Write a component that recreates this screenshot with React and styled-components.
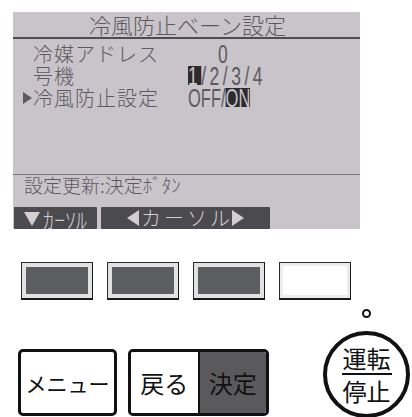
import React from "react";
import styled, { createGlobalStyle } from "styled-components";

const GlobalStyle = createGlobalStyle`
  html, body {
    margin: 0;
    padding: 0;
    background: #ffffff;
    overflow: hidden;
  }
  body {
    font-family: "Noto Sans CJK JP", "Noto Sans", sans-serif;
  }
`;

const lcd = {
  bg: "#c9c3ca",
  ink: "#5c5a5e",
  dark: "#4b4a4e",
};

const rows = [
  { label: "冷媒アドレス", value: "addr" },
  { label: "号機", value: "unit" },
  { label: "冷風防止設定", value: "mode", selected: true },
];

function App() {
  return (
    <>
      <GlobalStyle />
      <Page>
        <Screen>
          <Title>冷風防止ベーン設定</Title>
          <TitleRule />
          <Rows>
            {rows.map((row) => (
              <Row key={row.label}>
                <Marker>{row.selected && <Tri $dir="right" $size={6} />}</Marker>
                <Label>{row.label}</Label>
                {row.value === "addr" && <Digits $pad={43}>0</Digits>}
                {row.value === "unit" && (
                  <Digits $spacing={5}>
                    <Hi>1</Hi>/2/3/4
                  </Digits>
                )}
                {row.value === "mode" && (
                  <Digits $scale={0.66}>
                    OFF/<Hi>ON</Hi>
                  </Digits>
                )}
              </Row>
            ))}
          </Rows>
          <Rule />
          <Hint>設定更新:決定ﾎﾞﾀﾝ</Hint>
          <SoftKeys>
            <SoftKey $width={83}>
              <DownTri />
              <SoftText $size={22}>ｶｰｿﾙ</SoftText>
            </SoftKey>
            <SoftKey $width={169}>
              <Tri $dir="left" $size={8} />
              <SoftText $spacing={3}>カーソル</SoftText>
              <Tri $dir="right" $size={8} />
            </SoftKey>
          </SoftKeys>
        </Screen>

        <FnRow>
          <FnKey />
          <FnKey />
          <FnKey />
          <FnKey $light />
        </FnRow>

        <ControlRow>
          <MenuButton>メニュー</MenuButton>
          <PairButton>
            <PairHalf>戻る</PairHalf>
            <PairHalf $dark>決定</PairHalf>
          </PairButton>
          <PowerColumn>
            <Lamp />
            <PowerButton>
              <PowerText>運転</PowerText>
              <PowerRule />
              <PowerText>停止</PowerText>
            </PowerButton>
          </PowerColumn>
        </ControlRow>
      </Page>
    </>
  );
}

export default App;

const Page = styled.div`
  padding: 12px 0 0 13px;
  display: flex;
  flex-direction: column;
  align-items: flex-start;
`;

const Screen = styled.div`
  width: 347px;
  height: 217px;
  background: ${lcd.bg};
  color: ${lcd.ink};
  font-weight: 300;
  display: flex;
  flex-direction: column;
`;

const Title = styled.div`
  height: 25px;
  font-size: 22px;
  line-height: 25px;
  text-align: center;
  padding-left: 2px;
  white-space: nowrap;
`;

const TitleRule = styled.div`
  height: 2px;
  background: #4e4c50;
`;

const Rows = styled.div`
  flex: 1;
  padding-top: 4px;
  display: flex;
  flex-direction: column;
`;

const Row = styled.div`
  height: 22px;
  display: flex;
  align-items: center;
  font-size: 20px;
  line-height: 22px;
  white-space: nowrap;
`;

const Marker = styled.span`
  width: 20px;
  height: 22px;
  display: flex;
  align-items: center;
  justify-content: flex-end;
  padding-right: 1px;
  box-sizing: border-box;
`;

const Label = styled.span`
  width: 155px;
  letter-spacing: 1px;
`;

const Digits = styled.span`
  display: inline-block;
  font-family: "Liberation Sans", Arial, sans-serif;
  font-weight: 400;
  font-size: 25px;
  line-height: 22px;
  padding-left: ${(p) => p.$pad || 0}px;
  letter-spacing: ${(p) => p.$spacing || 0}px;
  transform: scaleX(${(p) => p.$scale || 0.7});
  transform-origin: left center;
`;

const Hi = styled.span`
  background: #2c2b2e;
  color: ${lcd.bg};
  display: inline-block;
  line-height: 18px;
  padding-top: 1px;
`;

const Tri = styled.span`
  display: inline-block;
  width: 0;
  height: 0;
  border-top: ${(p) => p.$size}px solid transparent;
  border-bottom: ${(p) => p.$size}px solid transparent;
  ${(p) =>
    p.$dir === "right"
      ? `border-left: ${p.$size * 1.5}px solid currentColor;`
      : `border-right: ${p.$size * 1.5}px solid currentColor;`}
`;

const DownTri = styled.span`
  display: inline-block;
  width: 0;
  height: 0;
  border-left: 8px solid transparent;
  border-right: 8px solid transparent;
  border-top: 14px solid currentColor;
  margin-right: 3px;
  margin-top: 2px;
`;

const Rule = styled.div`
  height: 1px;
  background: #7a777b;
`;

const Hint = styled.div`
  height: 32px;
  font-size: 19px;
  line-height: 20px;
  padding-left: 11px;
  white-space: nowrap;
`;

const SoftKeys = styled.div`
  display: flex;
  gap: 4px;
  padding-left: 1px;
`;

const SoftKey = styled.div`
  width: ${(p) => p.$width}px;
  height: 22px;
  background: ${lcd.dark};
  color: #d2ccd3;
  display: flex;
  align-items: center;
  justify-content: center;
  border-radius: 1px;
`;

const SoftText = styled.span`
  font-size: ${(p) => p.$size || 20}px;
  line-height: 22px;
  letter-spacing: ${(p) => p.$spacing || 0}px;
  margin-right: ${(p) => (p.$spacing ? -p.$spacing + 2 : 0)}px;
  margin-left: ${(p) => (p.$spacing ? 2 : 0)}px;
  white-space: nowrap;
`;

const FnRow = styled.div`
  margin-top: 33px;
  margin-left: 8px;
  display: flex;
  gap: 14px;
`;

const FnKey = styled.div`
  width: 72px;
  height: 38px;
  box-sizing: border-box;
  border: 1.5px solid #2b2b2b;
  border-right-color: #1a1a1a;
  border-bottom: 2px solid #1a1a1a;
  background: ${(p) => (p.$light ? "#ffffff" : "#5b5d60")};
  box-shadow: inset 0 0 0 ${(p) => (p.$light ? 3 : 4)}px
    ${(p) => (p.$light ? "#ececec" : "#e2e2e2")};
`;

const ControlRow = styled.div`
  margin-top: 9px;
  margin-left: 5px;
  display: flex;
  align-items: flex-end;
`;

const MenuButton = styled.div`
  width: 99px;
  height: 67px;
  box-sizing: border-box;
  border: 3px solid #111;
  border-radius: 5px;
  margin-bottom: 2px;
  display: flex;
  align-items: center;
  justify-content: center;
  font-size: 21px;
  color: #111;
  white-space: nowrap;
`;

const PairButton = styled.div`
  width: 141px;
  height: 67px;
  box-sizing: border-box;
  margin-left: 11px;
  margin-bottom: 2px;
  border: 3px solid #111;
  border-radius: 5px;
  overflow: hidden;
  display: flex;
`;

const PairHalf = styled.div`
  flex: 1;
  display: flex;
  align-items: center;
  justify-content: center;
  font-size: 24px;
  color: #111;
  background: ${(p) => (p.$dark ? "#5a5a5c" : "#ffffff")};
  border-left: ${(p) => (p.$dark ? "2px solid #111" : "none")};
`;

const PowerColumn = styled.div`
  margin-left: 54px;
  width: 87px;
  display: flex;
  flex-direction: column;
  align-items: center;
`;

const Lamp = styled.div`
  width: 9px;
  height: 9px;
  box-sizing: border-box;
  border: 2.5px solid #111;
  border-radius: 50%;
  margin-bottom: 13px;
`;

const PowerButton = styled.div`
  width: 87px;
  height: 87px;
  box-sizing: border-box;
  border: 4px solid #111;
  border-radius: 50%;
  display: flex;
  flex-direction: column;
  align-items: center;
  justify-content: center;
`;

const PowerText = styled.div`
  font-size: 24px;
  line-height: 24px;
  color: #111;
`;

const PowerRule = styled.div`
  width: 50px;
  height: 2px;
  background: #111;
  margin: 3px 0 4px;
`;
